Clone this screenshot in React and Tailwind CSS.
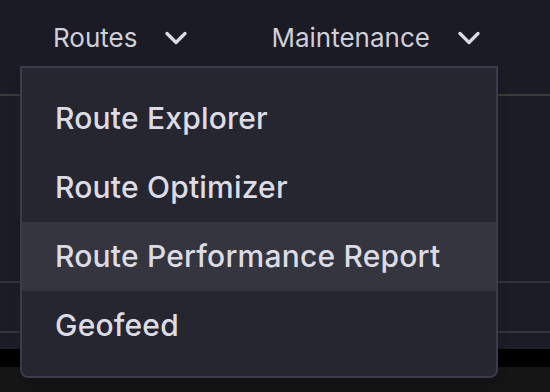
import React from "react";

function Chevron() {
  return (
    <svg width="22" height="14" viewBox="0 0 22 14" fill="none">
      <path d="M2 2.5 L11 11.5 L20 2.5" stroke="#dcdce6" strokeWidth="3.2" strokeLinecap="round" strokeLinejoin="round" />
    </svg>
  );
}

export default function App() {
  const items = ["Route Explorer", "Route Optimizer", "Route Performance Report", "Geofeed"];
  return (
    <div className="relative w-[550px] h-[392px] overflow-hidden bg-[#1b1b25]" style={{ fontFamily: "Inter, 'Noto Sans', sans-serif" }}>
      <div className="flex flex-col h-full">
        <div className="h-[94px] flex items-start pt-[22px] pl-[53px] gap-[84px] text-[26px] text-[#cfcfd9]">
          <div className="flex items-center gap-[28px] leading-[32px]">
            <span>Routes</span>
            <Chevron />
          </div>
          <div className="flex items-center gap-[28px] leading-[32px]">
            <span>Maintenance</span>
            <Chevron />
          </div>
        </div>
        <div className="h-[2px] bg-[#393b38]" />
        <div className="h-[185px] bg-[#1c1c26]" />
        <div className="h-[2px] bg-[#33333d]" />
        <div className="h-[48px] bg-[#1c1c26]" />
        <div className="h-[2px] bg-[#33333d]" />
        <div className="h-[16px] bg-[#1c1c26]" />
        <div className="h-[18px] bg-black" />
        <div className="flex-1 bg-[#151515]" />
      </div>
      <div className="absolute left-[20px] top-[66px] w-[478px] rounded-b-[8px] border-2 border-[#3b3b4d] bg-[#262631] py-[16px] shadow-lg">
        {items.map((t, i) => (
          <div
            key={t}
            className={`h-[69px] flex items-center pl-[33px] text-[30px] font-medium tracking-[0.2px] text-[#dcdce6] ${i === 2 ? "bg-[#35353f]" : ""}`}
          >
            {t}
          </div>
        ))}
      </div>
    </div>
  );
}
